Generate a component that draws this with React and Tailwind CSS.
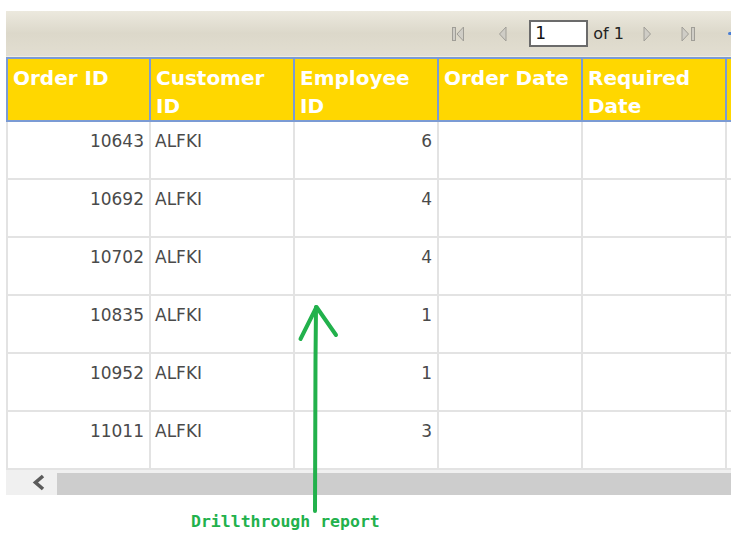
import React from "react";

const rows = [
  ["10643", "ALFKI", "6"],
  ["10692", "ALFKI", "4"],
  ["10702", "ALFKI", "4"],
  ["10835", "ALFKI", "1"],
  ["10952", "ALFKI", "1"],
  ["11011", "ALFKI", "3"],
];

const headers = ["Order ID", "Customer ID", "Employee ID", "Order Date", "Required Date", ""];

function FirstIcon() {
  return (
    <svg width="13" height="16" viewBox="0 0 13 16">
      <rect x="0.5" y="1.5" width="3" height="13" fill="#cfcdc6" stroke="#a09e97" />
      <path d="M11.5 1 L5 8 L11.5 15 Z" fill="#cfcdc6" stroke="#a09e97" />
    </svg>
  );
}
function PrevIcon() {
  return (
    <svg width="9" height="16" viewBox="0 0 9 16">
      <path d="M8 1 L1.5 8 L8 15 Z" fill="#cfcdc6" stroke="#a09e97" />
    </svg>
  );
}
function NextIcon() {
  return (
    <svg width="9" height="16" viewBox="0 0 9 16">
      <path d="M1 1 L7.5 8 L1 15 Z" fill="#cfcdc6" stroke="#a09e97" />
    </svg>
  );
}
function LastIcon() {
  return (
    <svg width="14" height="16" viewBox="0 0 14 16">
      <path d="M1 1 L7.5 8 L1 15 Z" fill="#cfcdc6" stroke="#a09e97" />
      <rect x="10.5" y="1.5" width="3" height="13" fill="#cfcdc6" stroke="#a09e97" />
    </svg>
  );
}

export default function App() {
  return (
    <div className="relative w-[731px] h-[549px] overflow-hidden bg-white" style={{ fontFamily: "'DejaVu Sans', Verdana, sans-serif" }}>
      <div className="pt-[11px] pl-[6px]">
        {/* Toolbar */}
        <div className="h-[45px] bg-gradient-to-b from-[#ece9de] via-[#dcd8ca] to-[#e2ded1] flex items-center">
          <div className="flex-1" />
          <div className="flex items-center">
            <div className="mr-[33px] flex items-center"><FirstIcon /></div>
            <div className="mr-[22px] flex items-center"><PrevIcon /></div>
            <div className="w-[59px] h-[27px] border-2 border-[#6b6b6b] bg-white flex items-center pl-[4px] text-[17px] text-[#111] leading-none" style={{ fontFamily: "'DejaVu Sans', Verdana, sans-serif" }}>1</div>
            <div className="ml-[5px] text-[16px] text-[#222] leading-none" style={{ fontFamily: "'DejaVu Sans', Verdana, sans-serif" }}>of 1</div>
            <div className="ml-[19px] flex items-center"><NextIcon /></div>
            <div className="ml-[29px] flex items-center"><LastIcon /></div>
            <div className="ml-[33px] mr-[-2px] w-[5px] h-[3px] rounded-full bg-[#4a7fd4]" />
          </div>
        </div>
        <div className="h-[1px] bg-[#efece3]" />

        {/* Header */}
        <div className="flex h-[65px] bg-[#ffd700] border-y-2 border-[#7b9bd4]">
          {headers.map((h, i) => (
            <div
              key={i}
              className={`shrink-0 ${i === 0 ? "w-[145px] border-l-2" : "w-[144px]"} h-full border-r-2 border-[#7b9bd4] pl-[5px] pt-[5px] text-white font-bold text-[20px] leading-[28px]`}
            >
              {h}
            </div>
          ))}
        </div>

        {/* Rows */}
        {rows.map((r, ri) => (
          <div key={ri} className="flex h-[58px] border-b-2 border-[#e3e3e3]">
            <div className="shrink-0 w-[145px] h-full border-x-2 border-[#e3e3e3] pr-[5px] pt-[7px] text-right text-[17px] leading-[24px] text-[#4a4a4a]">{r[0]}</div>
            <div className="shrink-0 w-[144px] h-full border-r-2 border-[#e3e3e3] pl-[4px] pt-[7px] text-[17px] leading-[24px] text-[#4a4a4a]">{r[1]}</div>
            <div className="shrink-0 w-[144px] h-full border-r-2 border-[#e3e3e3] pr-[5px] pt-[7px] text-right text-[17px] leading-[24px] text-[#4a4a4a]">{r[2]}</div>
            <div className="shrink-0 w-[144px] h-full border-r-2 border-[#e3e3e3]" />
            <div className="shrink-0 w-[144px] h-full border-r-2 border-[#e3e3e3]" />
            <div className="shrink-0 w-[144px] h-full" />
          </div>
        ))}

        {/* Scrollbar */}
        <div className="h-[25px] bg-[#f0f0f0] flex items-center">
          <div className="w-[51px] h-full flex items-center pl-[25px]">
            <svg width="15" height="17" viewBox="0 0 15 17">
              <path d="M12 2 L4.5 8.5 L12 15" fill="none" stroke="#5b5b5b" strokeWidth="3.6" />
            </svg>
          </div>
          <div className="flex-1 h-[22px] mt-[2px] bg-[#cdcdcd]" />
        </div>
      </div>

      {/* Annotation overlay */}
      <svg className="absolute left-0 top-0" width="731" height="549" viewBox="0 0 731 549">
        <path d="M316 307 L315.5 360 L315 511" fill="none" stroke="#22b14c" strokeWidth="4" strokeLinecap="round" />
        <path d="M300.5 339 L316.5 307 L336 335" fill="none" stroke="#22b14c" strokeWidth="4" strokeLinecap="round" strokeLinejoin="round" />
      </svg>
      <div
        className="absolute left-[191px] top-[511px] text-[16.5px] leading-[22px] font-bold text-[#22b14c] whitespace-nowrap"
        style={{ fontFamily: "'DejaVu Sans Mono', 'Liberation Mono', monospace" }}
      >
        Drillthrough report
      </div>
    </div>
  );
}
